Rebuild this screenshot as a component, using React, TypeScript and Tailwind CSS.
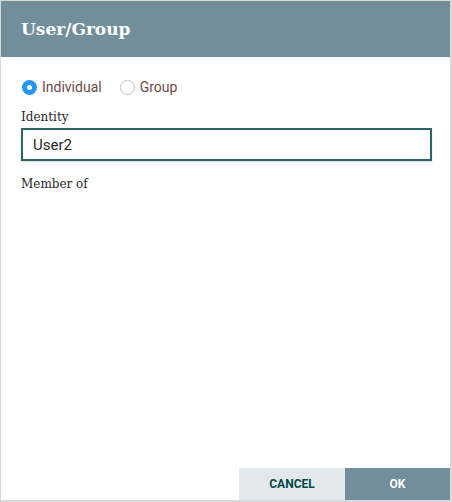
import React, { useState } from 'react';

type Kind = 'individual' | 'group';

const Radio: React.FC<{ checked: boolean; label: string; onClick: () => void }> = ({ checked, label, onClick }) => (
  <button type="button" onClick={onClick} className="flex items-center gap-[5px] cursor-pointer">
    {checked ? (
      <span className="w-[15px] h-[15px] rounded-full bg-[#2196f3] flex items-center justify-center">
        <span className="w-[5px] h-[5px] rounded-full bg-white" />
      </span>
    ) : (
      <span className="w-[15px] h-[15px] rounded-full border border-[#c4c4c4] bg-white" />
    )}
    <span className="text-[14px] text-[#6b4a4a] font-['Roboto',sans-serif]">{label}</span>
  </button>
);

export default function App() {
  const [kind, setKind] = useState<Kind>('individual');
  const [identity, setIdentity] = useState('User2');

  return (
    <div className="w-[452px] h-[502px] bg-[#d9d9d9] pt-px pb-[2px] pr-[2px] pl-px">
      <div className="w-full h-full bg-white flex flex-col">
        {/* Header */}
        <div className="h-[56px] bg-[#728e9b] flex items-center px-[20px]">
          <h1 className="text-white font-bold text-[17px] font-['DejaVu_Serif',serif] pt-[2px]">User/Group</h1>
        </div>

        {/* Body */}
        <div className="flex-1 px-[20px] pt-[20px]">
          <div className="flex items-center gap-[18px] pl-px">
            <Radio checked={kind === 'individual'} label="Individual" onClick={() => setKind('individual')} />
            <Radio checked={kind === 'group'} label="Group" onClick={() => setKind('group')} />
          </div>

          <div className="mt-[10px] text-[12px] text-[#262626] font-['DejaVu_Serif',serif]">Identity</div>
          <input
            value={identity}
            onChange={e => setIdentity(e.target.value)}
            className="mt-[2px] w-[411px] h-[33px] border-2 border-[#2d6464] px-[10px] text-[15px] text-[#262626] font-['Roboto',sans-serif] outline-none shadow-[0_1px_2px_rgba(0,0,0,0.15)]"
          />

          <div className="mt-[14px] text-[12px] text-[#262626] font-['DejaVu_Serif',serif]">Member of</div>
        </div>

        {/* Footer */}
        <div className="flex justify-end">
          <button className="w-[106px] h-[32px] bg-[#e3e8eb] text-[#004849] text-[12px] font-bold font-['Roboto',sans-serif]">CANCEL</button>
          <button className="w-[105px] h-[32px] bg-[#728e9b] text-white text-[12px] font-bold font-['Roboto',sans-serif]">OK</button>
        </div>
      </div>
    </div>
  );
}
